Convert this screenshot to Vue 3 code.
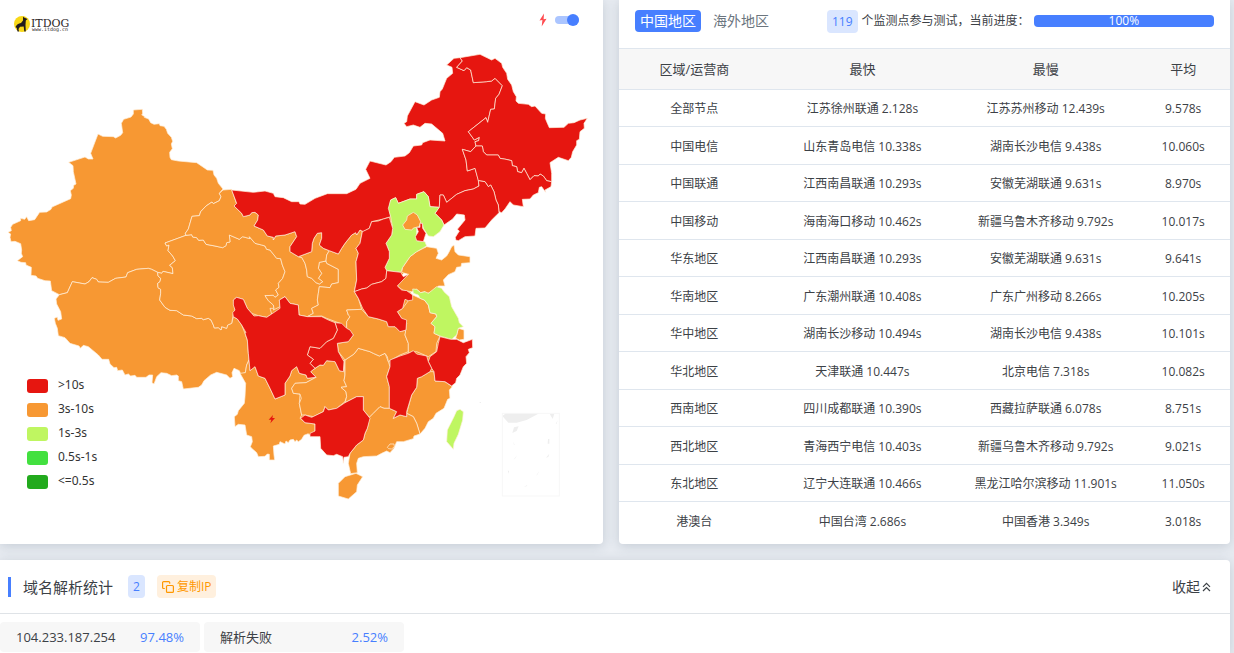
<script setup>
import { ref } from 'vue'

const hardware = ref(true)

const RED = '#e61610'
const ORANGE = '#f79833'
const LIME = '#bff661'

const legend = [
  { label: '>10s', color: RED },
  { label: '3s-10s', color: ORANGE },
  { label: '1s-3s', color: LIME },
  { label: '0.5s-1s', color: '#42e03f' },
  { label: '<=0.5s', color: '#22aa1d' },
]

const rows = [
  ['全部节点', '江苏徐州联通 2.128s', '江苏苏州移动 12.439s', '9.578s'],
  ['中国电信', '山东青岛电信 10.338s', '湖南长沙电信 9.438s', '10.060s'],
  ['中国联通', '江西南昌联通 10.293s', '安徽芜湖联通 9.631s', '8.970s'],
  ['中国移动', '海南海口移动 10.462s', '新疆乌鲁木齐移动 9.792s', '10.017s'],
  ['华东地区', '江西南昌联通 10.293s', '安徽芜湖联通 9.631s', '9.641s'],
  ['华南地区', '广东潮州联通 10.408s', '广东广州移动 8.266s', '10.205s'],
  ['华中地区', '湖南长沙移动 10.494s', '湖南长沙电信 9.438s', '10.101s'],
  ['华北地区', '天津联通 10.447s', '北京电信 7.318s', '10.082s'],
  ['西南地区', '四川成都联通 10.390s', '西藏拉萨联通 6.078s', '8.751s'],
  ['西北地区', '青海西宁电信 10.403s', '新疆乌鲁木齐移动 9.792s', '9.021s'],
  ['东北地区', '辽宁大连联通 10.466s', '黑龙江哈尔滨移动 11.901s', '11.050s'],
  ['港澳台', '中国台湾 2.686s', '中国香港 3.349s', '3.018s'],
]

const resolved = [
  { name: '104.233.187.254', share: '97.48%' },
  { name: '解析失败', share: '2.52%' },
]

const provinces = [
  { id: 'xinjiang', fill: ORANGE, points: '400,330 427,328 428,342 425,344 434,350 433,352 446,357 452,368 462,373 478,371 480,377 492,379 499,388 503,400 514,412 518,424 514,432 517,446 509,457 510,472 514,479 535,483 590,488 622,510 639,511 642,525 650,535 655,550 669,567 658,580 663,590 658,602 640,611 636,606 618,618 602,635 598,647 576,649 565,687 556,700 558,706 495,729 500,738 507,735 504,752 518,768 526,782 509,796 517,803 519,821 489,814 485,820 473,817 455,808 445,805 410,808 383,818 378,831 347,835 325,847 295,846 290,838 276,833 267,845 255,852 217,845 202,878 178,884 155,872 151,843 135,842 113,835 108,828 93,826 94,802 78,795 77,788 63,787 52,782 68,770 64,760 65,750 62,731 45,724 33,725 30,712 32,702 24,697 34,692 32,682 38,673 62,662 62,655 74,658 80,650 86,662 104,659 119,637 140,636 153,628 156,621 212,596 214,585 211,572 220,565 221,556 228,552 220,515 219,497 206,487 255,471 265,477 279,477 272,460 294,402 308,409 340,410 347,414 362,406 368,398 364,370 371,358 393,351 400,342' },
  { id: 'tibet', fill: ORANGE, points: '178,884 202,878 217,845 255,852 267,845 276,833 290,838 295,846 325,847 347,835 378,831 383,818 410,808 445,805 455,808 473,817 474,828 482,835 480,845 473,850 474,863 482,868 482,880 479,900 495,922 510,931 530,932 550,945 575,948 590,956 605,955 610,959 625,955 633,960 640,975 643,984 655,983 663,990 665,980 680,985 683,975 695,970 700,950 712,957 725,975 735,1000 742,1020 745,1060 747,1080 740,1095 736,1118 722,1122 718,1112 702,1105 696,1118 698,1130 690,1135 680,1125 650,1117 632,1125 612,1142 605,1155 595,1162 550,1167 545,1145 535,1142 535,1128 530,1125 515,1127 500,1120 483,1118 470,1130 462,1152 456,1148 458,1125 447,1125 438,1132 410,1132 405,1126 392,1128 385,1122 375,1125 367,1110 353,1112 350,1102 342,1103 330,1092 326,1078 306,1078 295,1065 265,1040 250,1036 241,1045 237,1038 210,1030 195,1013 175,1007 172,985 166,970 163,955 172,951 174,961 185,957 182,935 170,912 168,897' },
  { id: 'qinghai', fill: ORANGE, points: '558,706 575,704 578,711 590,713 596,721 610,720 618,733 645,738 668,743 678,737 680,728 690,726 688,705 718,718 728,710 750,716 748,710 765,730 785,735 795,738 800,748 810,750 830,775 842,776 847,795 855,815 848,835 835,850 837,862 827,870 835,885 825,892 820,886 795,887 805,902 820,915 822,925 810,925 815,942 800,952 775,947 755,940 742,925 730,898 710,892 700,900 705,930 700,942 695,970 683,975 680,985 665,980 663,990 655,983 643,984 640,975 633,960 625,955 610,959 605,955 590,956 575,948 550,945 530,932 510,931 495,922 479,900 482,880 482,868 474,863 473,850 480,845 482,835 474,828 473,817 485,820 489,814 519,821 517,803 509,796 526,782 518,768 504,752 507,735 500,738 495,729' },
  { id: 'gansu', fill: ORANGE, points: '669,570 695,568 710,612 702,618 725,640 730,650 750,645 755,638 765,637 775,645 773,660 762,678 790,690 802,708 820,712 820,720 827,708 855,705 885,695 890,710 870,740 870,755 895,770 905,772 915,790 920,810 922,830 935,835 948,848 958,852 968,845 955,835 965,820 955,805 958,787 978,783 980,790 1015,808 1015,848 995,852 990,863 958,860 955,880 952,900 955,915 935,925 940,940 922,950 897,945 895,915 870,910 855,890 838,900 840,920 820,930 822,925 820,915 805,902 795,887 820,886 825,892 835,885 827,870 837,862 835,850 848,835 855,815 847,795 842,776 830,775 810,750 800,748 795,738 785,735 765,730 748,710 750,716 728,710 718,718 688,705 690,726 680,728 678,737 668,743 645,738 618,733 610,720 596,721 590,713 578,711 575,704 558,706 556,700 565,687 576,649 598,647 602,635 618,618 636,606 640,611 658,602 663,590 658,580' },
  { id: 'ningxia', fill: ORANGE, points: '895,770 935,755 937,730 942,715 952,700 965,698 965,715 958,735 970,745 988,752 980,765 978,783 958,787 955,805 965,820 955,835 968,845 958,852 948,848 935,835 922,830 920,810 915,790 905,772' },
  { id: 'shaanxi', fill: ORANGE, points: '988,752 1015,762 1025,745 1035,730 1055,705 1067,698 1070,705 1080,690 1087,695 1080,730 1068,745 1075,760 1068,785 1070,840 1063,875 1075,895 1085,928 1040,930 1045,945 1050,950 1040,965 1040,985 1020,970 980,955 965,948 922,950 940,940 935,925 955,915 952,900 955,880 958,860 990,863 995,852 1015,848 1015,808 980,790 978,783 980,765' },
  { id: 'yunnan', fill: ORANGE, points: '747,1080 750,1112 765,1100 775,1128 795,1135 810,1165 825,1197 855,1185 855,1150 870,1128 875,1112 890,1100 898,1120 918,1125 922,1135 948,1132 918,1148 885,1150 875,1165 880,1180 900,1182 898,1210 905,1245 900,1255 915,1268 945,1272 945,1295 928,1305 925,1301 912,1306 905,1318 895,1325 890,1320 885,1325 880,1318 870,1320 865,1328 858,1323 855,1332 840,1325 838,1333 820,1338 822,1365 824,1380 808,1380 808,1363 802,1362 795,1369 775,1370 770,1358 755,1345 751,1340 757,1325 755,1310 740,1305 735,1275 715,1273 705,1280 703,1250 712,1243 715,1232 733,1210 735,1190 737,1150 720,1120 736,1118 740,1095' },
  { id: 'guizhou', fill: ORANGE, points: '945,1105 960,1095 970,1096 980,1082 1005,1085 1018,1112 1030,1115 1032,1080 1035,1125 1032,1142 1040,1160 1023,1162 1038,1175 1040,1190 1035,1205 1010,1225 985,1230 975,1220 970,1235 940,1250 915,1245 905,1245 898,1210 904,1195 900,1182 880,1180 875,1165 885,1150 918,1148 948,1132 932,1115' },
  { id: 'hunan', fill: ORANGE, points: '1035,1080 1062,1062 1075,1045 1110,1055 1120,1060 1138,1068 1155,1060 1165,1085 1170,1100 1160,1130 1168,1160 1168,1225 1152,1225 1140,1220 1120,1240 1108,1252 1090,1230 1090,1190 1070,1190 1035,1208 1040,1190 1038,1175 1023,1162 1040,1160 1032,1142 1035,1125' },
  { id: 'hubei', fill: ORANGE, points: '1040,930 1085,928 1105,950 1135,957 1160,965 1165,980 1185,980 1200,995 1218,990 1215,1005 1225,1030 1225,1055 1200,1065 1165,1085 1162,1070 1155,1060 1138,1068 1120,1060 1110,1055 1075,1045 1062,1062 1035,1080 1015,1055 1012,1030 1045,1025 1060,1005 1040,985 1040,965 1050,950 1045,945' },
  { id: 'anhui', fill: ORANGE, points: '1225,902 1238,885 1260,895 1273,900 1285,915 1290,938 1308,942 1310,950 1293,970 1305,980 1302,1000 1320,1008 1310,1030 1308,1055 1285,1070 1250,1055 1225,1058 1225,1030 1215,1005 1220,970 1205,955 1192,935 1208,925' },
  { id: 'shandong', fill: ORANGE, points: '1208,802 1230,770 1250,755 1280,740 1310,745 1315,760 1308,775 1325,780 1340,768 1346,758 1355,740 1362,735 1365,755 1375,765 1410,770 1410,788 1385,790 1383,800 1370,802 1365,815 1345,824 1330,840 1335,858 1315,858 1305,872 1290,878 1280,880 1275,875 1262,878 1250,868 1235,875 1210,872 1192,858 1210,835 1225,823 1205,817' },
  { id: 'fujian', fill: ORANGE, points: '1252,1135 1265,1130 1290,1115 1302,1115 1305,1143 1335,1145 1357,1160 1348,1170 1350,1195 1343,1198 1332,1225 1308,1240 1300,1255 1285,1265 1275,1285 1260,1302 1250,1270 1240,1250 1220,1240 1235,1185 1250,1162' },
  { id: 'guangdong', fill: ORANGE, points: '1108,1252 1120,1240 1140,1220 1152,1225 1168,1225 1190,1235 1180,1255 1200,1245 1220,1250 1220,1240 1240,1250 1250,1270 1260,1302 1242,1308 1240,1316 1210,1325 1190,1325 1182,1345 1170,1358 1160,1353 1145,1360 1130,1368 1090,1370 1075,1375 1070,1390 1072,1418 1052,1421 1045,1390 1050,1360 1070,1335 1090,1320 1095,1300 1102,1285' },
  { id: 'hainan', fill: ORANGE, points: '1035,1430 1068,1420 1088,1430 1072,1455 1070,1475 1045,1497 1015,1488 1015,1450' },
  { id: 'shanghai', fill: ORANGE, points: '1370,1005 1375,985 1392,990 1392,1018 1378,1020 1367,1015' },
  { id: 'neimenggu', fill: RED, points: '695,570 760,577 795,573 820,580 825,590 850,593 875,605 897,605 900,612 915,613 945,595 982,581 1040,581 1068,568 1080,550 1110,535 1097,508 1110,483 1158,495 1173,485 1183,472 1215,468 1228,458 1240,438 1265,435 1268,428 1290,420 1335,423 1328,400 1295,372 1275,370 1260,382 1240,375 1220,380 1212,370 1220,365 1222,348 1245,305 1272,315 1295,300 1318,292 1320,275 1327,267 1340,235 1358,220 1356,202 1340,195 1362,175 1380,173 1387,183 1370,202 1392,212 1400,203 1412,210 1420,248 1460,245 1475,243 1485,235 1507,257 1497,283 1487,295 1483,327 1472,328 1463,367 1458,353 1405,395 1423,420 1438,412 1436,422 1425,425 1428,438 1412,455 1387,448 1398,480 1402,513 1425,505 1435,540 1437,558 1420,567 1395,572 1370,583 1340,607 1330,585 1320,585 1318,622 1290,620 1285,590 1272,575 1250,583 1250,597 1230,597 1195,610 1187,593 1172,600 1168,625 1172,650 1150,657 1115,665 1108,685 1090,695 1080,690 1070,705 1067,698 1055,705 1035,730 1025,745 1015,762 988,752 970,745 958,735 965,715 965,698 952,700 942,715 937,730 935,755 895,770 870,755 870,740 890,710 885,695 855,705 827,708 820,720 820,712 802,708 790,690 762,678 773,660 775,645 765,637 755,638 750,645 730,650 725,640 702,618 710,610' },
  { id: 'heilongjiang', fill: RED, points: '1380,173 1440,163 1475,180 1485,175 1505,190 1508,202 1520,220 1523,238 1535,255 1540,275 1549,290 1548,303 1555,310 1585,313 1595,320 1605,318 1625,340 1637,342 1636,355 1640,365 1648,383 1692,382 1705,370 1722,368 1740,360 1762,355 1752,370 1753,385 1740,395 1738,418 1730,422 1730,435 1718,455 1714,472 1705,482 1675,472 1650,488 1655,520 1655,545 1640,542 1630,528 1620,522 1615,528 1602,527 1590,539 1580,520 1572,505 1565,518 1553,515 1550,500 1537,497 1535,482 1518,478 1500,475 1495,465 1460,465 1450,455 1447,438 1428,438 1425,425 1436,422 1438,412 1423,420 1405,395 1458,353 1463,367 1472,328 1483,327 1487,295 1497,283 1507,257 1485,235 1475,243 1460,245 1420,248 1412,210 1400,203 1392,212 1370,202 1387,183' },
  { id: 'jilin', fill: RED, points: '1428,438 1447,438 1450,455 1460,465 1495,465 1500,475 1518,478 1535,482 1537,497 1550,500 1553,515 1565,518 1572,505 1580,520 1590,539 1602,527 1615,528 1620,522 1630,528 1640,542 1655,545 1653,560 1635,570 1637,577 1625,560 1618,562 1615,578 1600,585 1590,597 1567,598 1570,620 1540,615 1530,605 1515,627 1505,638 1497,635 1495,615 1488,600 1482,575 1472,555 1465,560 1455,545 1435,542 1425,505 1402,513 1398,480 1387,448 1412,455' },
  { id: 'liaoning', fill: RED, points: '1437,558 1435,542 1455,545 1465,560 1472,555 1482,575 1488,600 1495,615 1497,638 1475,660 1455,684 1428,685 1425,708 1395,710 1375,722 1367,720 1366,712 1378,693 1372,688 1395,660 1393,645 1370,642 1358,657 1332,675 1325,660 1305,640 1318,620 1320,585 1330,585 1340,607 1370,583 1395,572 1420,567' },
  { id: 'hebei', fill: LIME, points: '1332,675 1325,660 1305,640 1318,622 1290,620 1285,590 1272,575 1250,583 1250,597 1230,597 1195,610 1187,593 1172,600 1165,625 1172,650 1178,685 1175,705 1158,730 1168,755 1168,775 1155,802 1160,812 1202,817 1208,802 1230,770 1250,755 1280,738 1275,725 1250,722 1250,680 1267,670 1270,685 1285,708 1300,710 1320,695' },
  { id: 'beijing', fill: ORANGE, points: '1240,637 1252,645 1262,665 1258,680 1240,684 1236,690 1215,688 1208,675 1220,660 1222,648' },
  { id: 'tianjin', fill: RED, points: '1260,670 1267,670 1268,685 1278,700 1270,725 1250,722 1246,710 1255,695 1250,682 1260,682' },
  { id: 'shanxi', fill: RED, points: '1087,695 1108,685 1115,665 1135,663 1150,657 1168,652 1178,685 1175,705 1158,730 1168,755 1168,775 1155,802 1160,812 1158,835 1145,845 1115,853 1100,864 1085,867 1063,875 1070,840 1068,785 1075,760 1068,745 1080,730' },
  { id: 'henan', fill: RED, points: '1160,812 1202,817 1210,830 1225,823 1192,858 1205,870 1220,872 1238,885 1238,900 1225,902 1215,898 1208,925 1192,935 1205,955 1220,960 1218,990 1200,995 1185,980 1165,980 1160,965 1135,957 1105,950 1088,925 1075,895 1063,875 1085,867 1100,864 1115,853 1145,845 1158,835' },
  { id: 'jiangsu', fill: LIME, points: '1238,867 1250,868 1262,878 1275,875 1285,880 1310,860 1325,865 1332,875 1348,890 1355,920 1375,955 1378,968 1390,980 1375,985 1370,1005 1355,1018 1320,1008 1302,1000 1305,980 1293,970 1310,950 1308,942 1290,938 1285,915 1273,900 1260,895 1255,885 1240,880' },
  { id: 'zhejiang', fill: RED, points: '1320,1010 1352,1018 1370,1018 1390,1028 1417,1018 1418,1043 1405,1048 1408,1058 1398,1070 1400,1090 1390,1100 1380,1125 1370,1135 1367,1148 1355,1158 1335,1145 1305,1143 1302,1115 1295,1105 1285,1085 1290,1070 1310,1055 1315,1030' },
  { id: 'jiangxi', fill: RED, points: '1170,1080 1200,1068 1225,1060 1240,1052 1250,1062 1280,1068 1285,1085 1295,1105 1290,1115 1265,1130 1252,1135 1250,1162 1235,1185 1220,1235 1220,1250 1200,1245 1180,1255 1190,1235 1168,1225 1168,1160 1160,1130 1170,1100' },
  { id: 'guangxi', fill: RED, points: '902,1255 915,1245 935,1252 970,1235 975,1220 985,1230 1010,1225 1035,1208 1070,1190 1090,1190 1090,1230 1110,1255 1102,1285 1095,1300 1090,1320 1070,1335 1050,1360 1045,1370 1032,1372 1030,1390 1028,1370 1010,1363 1000,1367 980,1365 962,1345 960,1310 930,1310 930,1300 945,1293 945,1272 915,1268' },
  { id: 'chongqing', fill: RED, points: '1005,968 1025,970 1040,985 1050,990 1060,1005 1045,1025 1012,1030 1015,1055 1032,1085 1030,1115 1018,1112 1005,1085 980,1082 970,1096 960,1095 945,1105 930,1090 940,1078 922,1065 930,1040 960,1045 980,1025 1000,1015 1012,990' },
  { id: 'sichuan', fill: RED, points: '700,900 710,892 730,898 742,925 755,940 762,948 775,947 800,952 815,942 840,925 838,900 855,890 870,910 895,915 897,945 922,950 965,950 985,960 1005,968 1012,990 1000,1015 980,1025 960,1045 930,1040 922,1065 940,1078 930,1090 945,1105 932,1115 948,1132 922,1135 918,1125 898,1120 890,1100 875,1112 870,1128 855,1150 855,1185 825,1197 810,1165 795,1135 775,1128 765,1100 750,1112 745,1060 742,1020 735,1000 738,998 725,975 712,957 700,950 698,938 705,930 700,915' },
  { id: 'hongkong', fill: ORANGE, points: '1162,1342 1170,1332 1182,1332 1183,1341 1174,1347 1166,1346' },
  { id: 'taiwan', fill: LIME, points: '1380,1228 1390,1235 1388,1260 1375,1303 1362,1330 1360,1348 1340,1325 1342,1290 1362,1250 1370,1232' },
]
</script>

<template>
  <main class="page">
    <div class="top">
      <section class="card map-card">
        <header class="map-head">
          <svg class="logo" viewBox="0 0 60 20" role="img" aria-label="ITDOG">
            <circle cx="8" cy="10" r="8" fill="#f8d817" />
            <path d="M1.500 13Q3 9.500 7 9L9 6.500 9 2.500 10 3.500 13.500 5 11.800 6.600 11.500 11 11.800 17.500H10.300L9.700 12.500 6 12.800 4.500 15 5 17.500H3.500L2.800 14Z" fill="#211b1c" />
            <text x="17" y="13" class="brand">ITDOG</text>
            <text x="18" y="17" class="site">www.itdog.cn</text>
          </svg>
          <label class="speed">
            <svg width="8" height="14" viewBox="0 0 8 14" aria-hidden="true">
              <path d="M5 .5 .5 7.500 3.400 7 2.700 13.500 7.500 5.700 4.600 6.200Z" fill="#ff4c50" />
            </svg>
            <input v-model="hardware" type="checkbox" class="switch" aria-label="加速" />
          </label>
        </header>
        <svg class="map" viewBox="0 0 1809 1632" role="img" aria-label="中国地区响应时间分布">
          <path class="land" d="M700 600 1080 640 1180 640 1280 750 1200 830 1240 890 1300 960 1360 1010 1320 1110 1230 1280 1070 1350 930 1290 750 1250 730 1060 600 900Z" />
          <polygon v-for="p in provinces" :key="p.id" :points="p.points" :fill="p.fill" class="province" />
          <path d="M1507 1248 1518 1240H1618L1580 1260 1550 1268H1525ZM1649 1241H1663L1658 1257ZM1542 1282 1556 1279 1550 1293 1537 1299ZM1644 1317H1648V1331H1643ZM1638 1373 1648 1361 1645 1371ZM1667 1272 1673 1261 1670 1271ZM1540 1380 1551 1366 1546 1375ZM1608 1428 1618 1412 1613 1423ZM1523 1412H1527V1421ZM1572 1460 1582 1455 1580 1459ZM1540 1325 1544 1334 1542 1335ZM1439 1206H1443V1209H1439Z" fill="#eee" />
          <rect x="1507" y="1240" width="171" height="248" fill="none" stroke="#f7f7f7" stroke-width="3" />
          <path d="M819 1245 806 1259H814L811 1270 825 1254H817Z" fill="#e61610" />
        </svg>
        <ul class="legend">
          <li v-for="item in legend" :key="item.label">
            <i :style="{ background: item.color }"></i><span>{{ item.label }}</span>
          </li>
        </ul>
      </section>

      <section class="card stats">
        <header class="stats-head">
          <nav class="tabs">
            <button type="button" class="tab active">中国地区</button>
            <button type="button" class="tab">海外地区</button>
          </nav>
          <span class="badge">119</span>
          <span class="note">个监测点参与测试，当前进度：</span>
          <div class="progress" role="progressbar" aria-valuenow="100" aria-label="当前进度">100%</div>
        </header>
        <table>
          <colgroup><col class="c1" /><col class="c2" /><col class="c3" /><col class="c4" /></colgroup>
          <thead>
            <tr><th>区域/运营商</th><th>最快</th><th>最慢</th><th>平均</th></tr>
          </thead>
          <tbody>
            <tr v-for="row in rows" :key="row[0]">
              <td v-for="(cell, i) in row" :key="i">{{ cell }}</td>
            </tr>
          </tbody>
        </table>
      </section>
    </div>

    <section class="card dns">
      <header class="dns-head">
        <h2>域名解析统计</h2>
        <span class="badge small">2</span>
        <button type="button" class="copy">
          <svg width="12" height="12" viewBox="0 0 12 12" fill="none" stroke="currentColor" stroke-width="1.200" aria-hidden="true">
            <rect x="4.500" y="4.500" width="6.900" height="6.900" rx="1" />
            <path d="M2.800 7.500H1.600A1 1 0 0 1 .6 6.500V1.600A1 1 0 0 1 1.600.6H6.700A1 1 0 0 1 7.700 1.600V2.800" />
          </svg>
          复制IP
        </button>
        <button type="button" class="fold">
          收起
          <svg width="9" height="10" viewBox="0 0 9 10" fill="none" stroke="currentColor" stroke-width="1.200" aria-hidden="true">
            <path d="M1 4.800 4.500 1.300 8 4.800M1 9 4.500 5.500 8 9" />
          </svg>
        </button>
      </header>
      <ul class="ips">
        <li v-for="ip in resolved" :key="ip.name"><span>{{ ip.name }}</span><b>{{ ip.share }}</b></li>
      </ul>
    </section>
  </main>
</template>

<style>
body {
  margin: 0;
  background: #e7ebf1;
}
</style>

<style scoped>
.page {
  box-sizing: border-box;
  display: flex;
  flex-direction: column;
  gap: 16px;
  min-height: 100vh;
  padding-right: 4px;
  color: #3c4146;
  font: 12px/18px "Open Sans", "Noto Sans CJK SC", sans-serif;
}
button {
  margin: 0;
  border: 0;
  background: none;
  font: inherit;
  color: inherit;
  cursor: pointer;
}
ul {
  margin: 0;
  padding: 0;
  list-style: none;
}
.top {
  display: grid;
  grid-template-columns: 603fr 611fr;
  gap: 16px;
}
.card {
  background: #fff;
  border-radius: 0 0 4px 4px;
  box-shadow: 0 2px 12px rgba(60, 80, 100, 0.2);
}
.map-card {
  position: relative;
  border-radius: 0 0 4px 0;
}
.map-head {
  position: absolute;
  inset: 0 0 auto;
  display: flex;
  justify-content: space-between;
  padding: 14px 24px 0 14px;
}
.logo {
  width: 60px;
  height: 20px;
}
.brand {
  font: 11px "DejaVu Serif", serif;
  fill: #2c2526;
}
.site {
  font: 5px "DejaVu Sans Mono", monospace;
  fill: #2c2526;
}
.speed {
  display: flex;
  align-items: center;
  gap: 8px;
  height: 12px;
}
.switch {
  appearance: none;
  display: flex;
  align-items: center;
  justify-content: flex-end;
  width: 24px;
  height: 8px;
  margin: 0;
  border-radius: 4px;
  background: #abc5ff;
}
.switch::after {
  content: "";
  width: 12px;
  height: 12px;
  border-radius: 50%;
  background: #477fff;
}
.map {
  display: block;
  width: 100%;
}
.land {
  fill: #f79833;
}
.province {
  stroke: rgba(255, 240, 220, 0.7);
  stroke-width: 3;
  stroke-linejoin: round;
}
.legend {
  position: absolute;
  left: 27px;
  bottom: 50px;
  font-family: "Noto Sans", sans-serif;
  color: #333;
}
.legend li {
  display: flex;
  align-items: center;
  gap: 10px;
  height: 24px;
}
.legend i {
  width: 21px;
  height: 14px;
  border-radius: 3px;
}
.legend span {
  padding-bottom: 2px;
}
.stats-head {
  display: flex;
  align-items: center;
  box-sizing: border-box;
  height: 48px;
  padding: 0 16px 6px;
}
.tabs {
  display: flex;
  gap: 7px;
  margin-right: 53px;
}
.tab {
  padding: 0 5px;
  border-radius: 4px;
  font-size: 14px;
  line-height: 22px;
  color: #6b757e;
}
.tab.active {
  background: #477fff;
  color: #fff;
}
.badge {
  padding: 0 5px;
  border-radius: 4px;
  background: #dae6ff;
  color: #477fff;
  line-height: 23px;
}
.note {
  margin: 0 4px;
  white-space: nowrap;
}
.progress {
  flex: 1;
  border-radius: 4px;
  background: #477fff;
  color: #fff;
  line-height: 12px;
  text-align: center;
}
table {
  width: 100%;
  margin-bottom: 4px;
  border-collapse: collapse;
  table-layout: fixed;
  text-align: center;
}
.c1 { width: 25%; }
.c2 { width: 30%; }
.c3 { width: 30%; }
.c4 { width: 15%; }
th,
td {
  box-sizing: border-box;
  padding: 0 2px 0 0;
  border-top: 1px solid #dfe6ee;
  white-space: nowrap;
}
th {
  height: 41px;
  background: #f7f7f7;
  font-size: 13px;
  font-weight: 400;
}
td {
  height: 37px;
  padding-top: 2px;
}
tr:nth-child(even) td {
  height: 38px;
}
.dns {
  flex: 1;
  border-radius: 0 4px 0 0;
}
.dns-head {
  display: flex;
  align-items: center;
  box-sizing: border-box;
  height: 54px;
  padding: 0 19px 0 8px;
  border-bottom: 1px solid #dfe3e7;
}
h2 {
  margin: 0;
  padding-left: 12px;
  border-left: 3px solid #477fff;
  font-size: 15px;
  font-weight: 400;
  line-height: 20px;
}
.badge.small {
  margin: 0 12px 0 15px;
}
.copy {
  display: flex;
  align-items: center;
  gap: 3px;
  padding: 0 5px;
  border-radius: 4px;
  background: #fff0de;
  color: #ff9800;
  line-height: 23px;
}
.fold {
  display: flex;
  align-items: center;
  gap: 2px;
  margin-left: auto;
  padding: 0;
  font-size: 14px;
}
.ips {
  display: flex;
  gap: 4px;
  padding-top: 8px;
}
.ips li {
  display: flex;
  justify-content: space-between;
  box-sizing: border-box;
  width: 200px;
  padding: 0 16px;
  border-radius: 4px;
  background: #f7f7f7;
  font-size: 13px;
  line-height: 30px;
}
.ips b {
  font-weight: 400;
  color: #477fff;
}
</style>
